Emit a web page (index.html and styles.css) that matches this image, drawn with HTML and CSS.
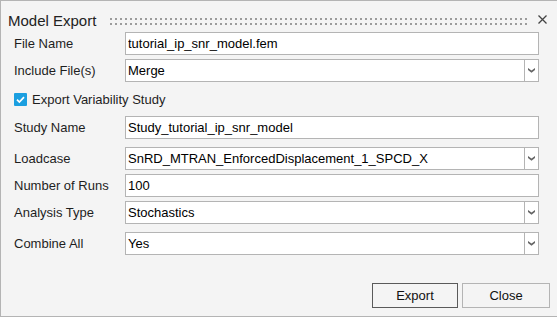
FILE: index.html
```html
<!DOCTYPE html>
<html lang="en">
<head>
    <meta charset="UTF-8">
    <meta name="viewport" content="width=device-width, initial-scale=1.0">
    <title>Model Export</title>
    <link rel="stylesheet" href="styles.css">
</head>
<body>
    <div class="dialog">
        <div class="titlebar">
            <span class="title">Model Export</span>
            <span class="grip"></span>
            <svg class="close" width="9" height="9" viewBox="0 0 9 9">
                <path d="M0.5 0.5 L8.5 8.5 M8.5 0.5 L0.5 8.5" stroke="#444" stroke-width="1.3" fill="none"/>
            </svg>
        </div>
        <div class="form">
            <div class="row">
                <label>File Name</label>
                <input class="field" type="text" value="tutorial_ip_snr_model.fem">
            </div>
            <div class="row">
                <label>Include File(s)</label>
                <div class="field select">
                    <span class="value">Merge</span>
                    <span class="arrow"><svg width="7" height="5" viewBox="0 0 7 5"><path d="M0 0 L3.5 2.6 L7 0 L7 2 L3.5 4.8 L0 2 Z" fill="#666"/></svg></span>
                </div>
            </div>
            <div class="row check-row">
                <label class="check">
                    <svg class="box" width="13" height="13" viewBox="0 0 13 13">
                        <rect width="13" height="13" rx="1" fill="#1b9fe0"/>
                        <path d="M3 6.6 L5.4 9 L10 4.2" stroke="#fff" stroke-width="1.7" fill="none"/>
                    </svg>
                    <span>Export Variability Study</span>
                </label>
            </div>
            <div class="row study">
                <label>Study Name</label>
                <input class="field" type="text" value="Study_tutorial_ip_snr_model">
            </div>
            <div class="row gap-lg">
                <label>Loadcase</label>
                <div class="field select">
                    <span class="value">SnRD_MTRAN_EnforcedDisplacement_1_SPCD_X</span>
                    <span class="arrow"><svg width="7" height="5" viewBox="0 0 7 5"><path d="M0 0 L3.5 2.6 L7 0 L7 2 L3.5 4.8 L0 2 Z" fill="#666"/></svg></span>
                </div>
            </div>
            <div class="row">
                <label>Number of Runs</label>
                <input class="field" type="text" value="100">
            </div>
            <div class="row">
                <label>Analysis Type</label>
                <div class="field select">
                    <span class="value">Stochastics</span>
                    <span class="arrow"><svg width="7" height="5" viewBox="0 0 7 5"><path d="M0 0 L3.5 2.6 L7 0 L7 2 L3.5 4.8 L0 2 Z" fill="#666"/></svg></span>
                </div>
            </div>
            <div class="row gap-lg">
                <label>Combine All</label>
                <div class="field select">
                    <span class="value">Yes</span>
                    <span class="arrow"><svg width="7" height="5" viewBox="0 0 7 5"><path d="M0 0 L3.5 2.6 L7 0 L7 2 L3.5 4.8 L0 2 Z" fill="#666"/></svg></span>
                </div>
            </div>
        </div>
        <div class="actions">
            <button class="btn btn-export">Export</button>
            <button class="btn btn-close">Close</button>
        </div>
    </div>
</body>
</html>
```

FILE: styles.css
```css
* {
    box-sizing: border-box;
}
body {
    margin: 0;
    font-family: "Liberation Sans", Arial, sans-serif;
    font-size: 13px;
    color: #1e1e1e;
    background: #f4f4f4;
}
.dialog {
    width: 557px;
    height: 317px;
    background: #f4f4f4;
    border: 1px solid #b4b4b4;
    border-right: none;
}
.titlebar {
    display: flex;
    align-items: flex-start;
    height: 31px;
    padding-left: 7px;
}
.title {
    font-size: 15px;
    line-height: 17px;
    margin-top: 11px;
    color: #222;
}
.grip {
    flex: 1;
    height: 7px;
    margin: 17px 11px 0 14px;
    background-image: radial-gradient(circle at 1px 1px, #9c9c9c 1px, transparent 1.5px);
    background-size: 5px 5px;
}
.close {
    margin: 14px 10px 0 0;
}
.form {
    padding-left: 13px;
}
.row {
    display: grid;
    grid-template-columns: 111px 414px;
    align-items: center;
    height: 23px;
    margin-top: 4px;
}
.row:first-child {
    margin-top: 0;
}
.row.check-row {
    margin-top: 6px;
}
.row.study {
    margin-top: 5px;
}
.row.gap-lg {
    margin-top: 8px;
}
.check {
    grid-column: 1 / -1;
    display: flex;
    align-items: center;
    gap: 5px;
    white-space: nowrap;
}
.check .box {
    flex-shrink: 0;
}
.field {
    width: 414px;
    height: 23px;
    border: 1px solid #b4b4b4;
    background: #fff;
    padding: 0 2px;
    font-family: inherit;
    font-size: 13px;
    color: #000;
    outline: none;
}
.select {
    display: flex;
    align-items: stretch;
    padding: 0;
}
.select .value {
    flex: 1;
    padding-left: 2px;
    line-height: 21px;
}
.select .arrow {
    width: 14px;
    border-left: 1px solid #b4b4b4;
    display: flex;
    align-items: center;
    justify-content: center;
}
.actions {
    display: flex;
    justify-content: flex-end;
    gap: 4px;
    margin-top: 28px;
    padding-right: 7px;
}
.btn {
    height: 25px;
    background: #f4f4f4;
    border: 1px solid #b4b4b4;
    font-family: inherit;
    font-size: 13px;
    color: #111;
    padding: 0;
}
.btn-export {
    width: 86px;
    border-color: #5a5a5a;
}
.btn-close {
    width: 88px;
}
```
